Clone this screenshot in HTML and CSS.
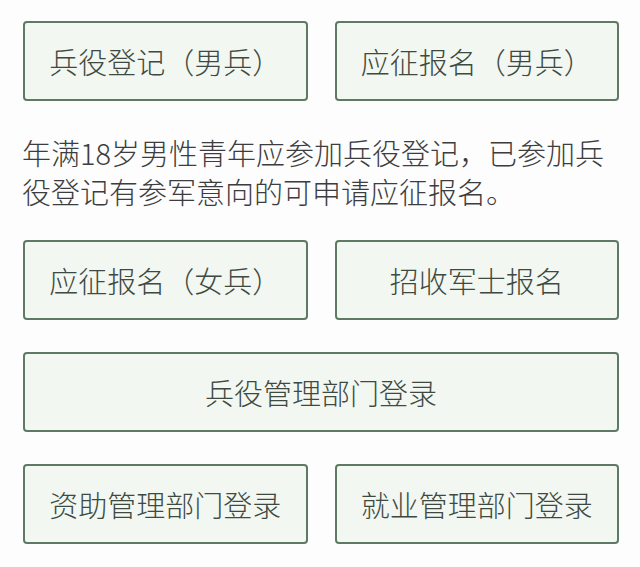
FILE: index.html
```html
<!DOCTYPE html>
<html lang="zh-CN">
<head>
<meta charset="utf-8">
<link rel="stylesheet" href="styles.css">
<title>征兵报名</title>
</head>
<body>
<main class="page">
  <div class="row">
    <a class="btn">兵役登记（男兵）</a>
    <a class="btn">应征报名（男兵）</a>
  </div>
  <p class="note">年满18岁男性青年应参加兵役登记，已参加兵役登记有参军意向的可申请应征报名。</p>
  <div class="row">
    <a class="btn">应征报名（女兵）</a>
    <a class="btn">招收军士报名</a>
  </div>
  <div class="row single">
    <a class="btn">兵役管理部门登录</a>
  </div>
  <div class="row">
    <a class="btn">资助管理部门登录</a>
    <a class="btn">就业管理部门登录</a>
  </div>
</main>
</body>
</html>
```
FILE: styles.css
```css
html, body {
  margin: 0;
  padding: 0;
  background: #fcfdfc;
}
.page {
  padding: 21px 21px 0 23px;
  display: flex;
  flex-direction: column;
  font-family: "Noto Sans CJK SC", "Noto Sans", sans-serif;
  font-weight: 300;
  text-spacing-trim: space-all;
}
.row {
  display: grid;
  grid-template-columns: 1fr 1fr;
  column-gap: 27px;
  margin-bottom: 32px;
}
.row.single {
  grid-template-columns: 1fr;
}
.btn {
  height: 80px;
  box-sizing: border-box;
  border: 2px solid #5f7a64;
  border-radius: 4px;
  background: #f2f7f1;
  color: #3e4a41;
  font-size: 29px;
  display: flex;
  align-items: center;
  justify-content: center;
  white-space: nowrap;
}
.note {
  margin: 0 0 30px -1px;
  font-size: 29px;
  line-height: 38.5px;
  color: #3d3d40;
}
```
